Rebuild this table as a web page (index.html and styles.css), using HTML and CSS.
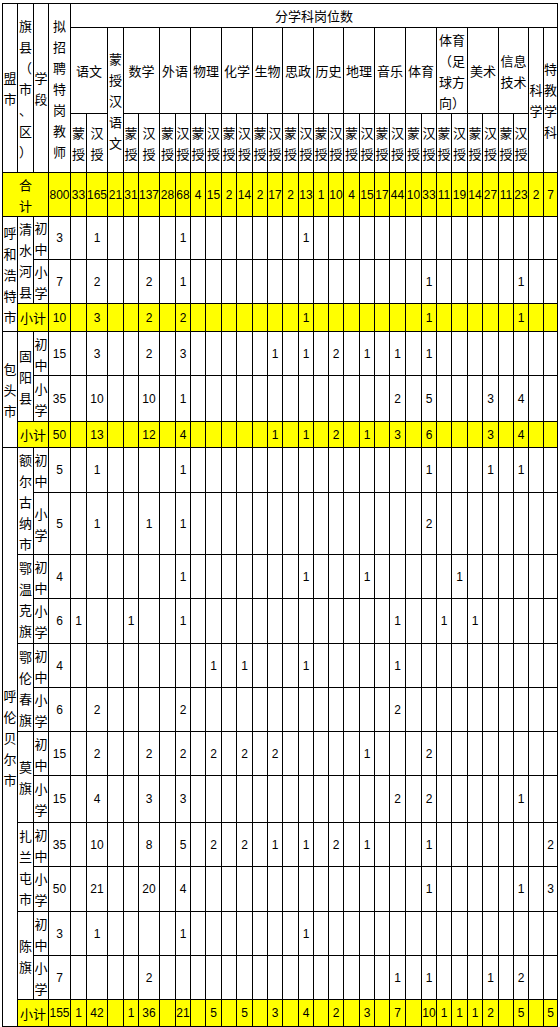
FILE: index.html
```html
<!DOCTYPE html>
<html lang="zh-CN">
<head>
<meta charset="utf-8">
<title>特岗教师岗位表</title>
<link rel="stylesheet" href="styles.css">
</head>
<body>
<table class="sheet">
<colgroup>
<col class="w15"><col class="w16"><col class="w15"><col class="w22">
<col class="w16"><col class="w21"><col class="w16"><col class="w15"><col class="w21">
<col class="w16"><col class="w15"><col class="w15"><col class="w16"><col class="w15">
<col class="w16"><col class="w15"><col class="w15"><col class="w16"><col class="w15">
<col class="w15"><col class="w15"><col class="w16"><col class="w15"><col class="w15">
<col class="w16"><col class="w16"><col class="w15"><col class="w15"><col class="w16">
<col class="w15"><col class="w16"><col class="w15"><col class="w15"><col class="w15">
<col class="w14">
</colgroup>
<thead>
<tr class="r24">
<th rowspan="3">盟市</th>
<th rowspan="3">旗县（市、区）</th>
<th rowspan="3">学段</th>
<th rowspan="3">拟招聘特岗教师</th>
<th colspan="31">分学科岗位数</th>
</tr>
<tr class="r86">
<th colspan="2">语文</th>
<th rowspan="2">蒙授汉语文</th>
<th colspan="2">数学</th>
<th colspan="2">外语</th>
<th colspan="2">物理</th>
<th colspan="2">化学</th>
<th colspan="2">生物</th>
<th colspan="2">思政</th>
<th colspan="2">历史</th>
<th colspan="2">地理</th>
<th colspan="2">音乐</th>
<th colspan="2">体育</th>
<th colspan="2">体育（足球方向）</th>
<th colspan="2">美术</th>
<th colspan="2">信息技术</th>
<th rowspan="2">科学</th>
<th rowspan="2">特教学科</th>
</tr>
<tr class="r59">
<th>蒙授</th><th>汉授</th>
<th>蒙授</th><th>汉授</th>
<th>蒙授</th><th>汉授</th>
<th>蒙授</th><th>汉授</th>
<th>蒙授</th><th>汉授</th>
<th>蒙授</th><th>汉授</th>
<th>蒙授</th><th>汉授</th>
<th>蒙授</th><th>汉授</th>
<th>蒙授</th><th>汉授</th>
<th>蒙授</th><th>汉授</th>
<th>蒙授</th><th>汉授</th>
<th>蒙授</th><th>汉授</th>
<th>蒙授</th><th>汉授</th>
<th>蒙授</th><th>汉授</th>
</tr>
</thead>
<tbody>
<tr class="r44 y">
<th colspan="3">合<br>计</th><td>800</td>
<td>33</td><td>165</td><td>21</td><td>31</td><td>137</td><td>28</td><td>68</td><td>4</td><td>15</td><td>2</td><td>14</td><td>2</td><td>17</td><td>2</td><td>13</td><td>1</td><td>10</td><td>4</td><td>15</td><td>17</td><td>44</td><td>10</td><td>33</td><td>11</td><td>19</td><td>14</td><td>27</td><td>11</td><td>23</td><td>2</td><td>7</td>
</tr>

<tr class="r43">
<th rowspan="3">呼和浩特市</th><th rowspan="2">清水河县</th><th>初中</th><td>3</td>
<td></td><td>1</td><td></td><td></td><td></td><td></td><td>1</td>
<td></td><td></td><td></td><td></td><td></td><td></td><td></td><td>1</td>
<td></td><td></td><td></td><td></td><td></td><td></td><td></td><td></td>
<td></td><td></td><td></td><td></td><td></td><td></td><td></td><td></td>
</tr>
<tr class="r44">
<th>小学</th><td>7</td>
<td></td><td>2</td><td></td><td></td><td>2</td><td></td><td>1</td>
<td></td><td></td><td></td><td></td><td></td><td></td><td></td><td></td>
<td></td><td></td><td></td><td></td><td></td><td></td><td></td><td>1</td>
<td></td><td></td><td></td><td></td><td></td><td>1</td><td></td><td></td>
</tr>
<tr class="r28 y">
<th colspan="2">小计</th><td>10</td>
<td></td><td>3</td><td></td><td></td><td>2</td><td></td><td>2</td>
<td></td><td></td><td></td><td></td><td></td><td></td><td></td><td>1</td>
<td></td><td></td><td></td><td></td><td></td><td></td><td></td><td>1</td>
<td></td><td></td><td></td><td></td><td></td><td>1</td><td></td><td></td>
</tr>

<tr class="r44">
<th rowspan="3">包头市</th><th rowspan="2">固阳县</th><th>初中</th><td>15</td>
<td></td><td>3</td><td></td><td></td><td>2</td><td></td><td>3</td>
<td></td><td></td><td></td><td></td><td></td><td>1</td><td></td><td>1</td>
<td></td><td>2</td><td></td><td>1</td><td></td><td>1</td><td></td><td>1</td>
<td></td><td></td><td></td><td></td><td></td><td></td><td></td><td></td>
</tr>
<tr class="r46">
<th>小学</th><td>35</td>
<td></td><td>10</td><td></td><td></td><td>10</td><td></td><td>1</td>
<td></td><td></td><td></td><td></td><td></td><td></td><td></td><td></td>
<td></td><td></td><td></td><td></td><td></td><td>2</td><td></td><td>5</td>
<td></td><td></td><td></td><td>3</td><td></td><td>4</td><td></td><td></td>
</tr>
<tr class="r26 y">
<th colspan="2">小计</th><td>50</td>
<td></td><td>13</td><td></td><td></td><td>12</td><td></td><td>4</td>
<td></td><td></td><td></td><td></td><td></td><td>1</td><td></td><td>1</td>
<td></td><td>2</td><td></td><td>1</td><td></td><td>3</td><td></td><td>6</td>
<td></td><td></td><td></td><td>3</td><td></td><td>4</td><td></td><td></td>
</tr>

<tr class="r45">
<th rowspan="13">呼伦贝尔市</th><th rowspan="2">额尔古纳市</th><th>初中</th><td>5</td>
<td></td><td>1</td><td></td><td></td><td></td><td></td><td>1</td>
<td></td><td></td><td></td><td></td><td></td><td></td><td></td><td></td>
<td></td><td></td><td></td><td></td><td></td><td></td><td></td><td>1</td>
<td></td><td></td><td></td><td>1</td><td></td><td>1</td><td></td><td></td>
</tr>
<tr class="r62">
<th>小学</th><td>5</td>
<td></td><td>1</td><td></td><td></td><td>1</td><td></td><td>1</td>
<td></td><td></td><td></td><td></td><td></td><td></td><td></td><td></td>
<td></td><td></td><td></td><td></td><td></td><td></td><td></td><td>2</td>
<td></td><td></td><td></td><td></td><td></td><td></td><td></td><td></td>
</tr>
<tr class="r44">
<th rowspan="2">鄂温克旗</th><th>初中</th><td>4</td>
<td></td><td></td><td></td><td></td><td></td><td></td><td>1</td>
<td></td><td></td><td></td><td></td><td></td><td></td><td></td><td>1</td>
<td></td><td></td><td></td><td>1</td><td></td><td></td><td></td><td></td>
<td></td><td>1</td><td></td><td></td><td></td><td></td><td></td><td></td>
</tr>
<tr class="r45">
<th>小学</th><td>6</td>
<td>1</td><td></td><td></td><td>1</td><td></td><td></td><td>1</td>
<td></td><td></td><td></td><td></td><td></td><td></td><td></td><td></td>
<td></td><td></td><td></td><td></td><td></td><td>1</td><td></td><td></td>
<td>1</td><td></td><td>1</td><td></td><td></td><td></td><td></td><td></td>
</tr>
<tr class="r44">
<th rowspan="2">鄂伦春旗</th><th>初中</th><td>4</td>
<td></td><td></td><td></td><td></td><td></td><td></td><td></td>
<td></td><td>1</td><td></td><td>1</td><td></td><td></td><td></td><td>1</td>
<td></td><td></td><td></td><td></td><td></td><td>1</td><td></td><td></td>
<td></td><td></td><td></td><td></td><td></td><td></td><td></td><td></td>
</tr>
<tr class="r44">
<th>小学</th><td>6</td>
<td></td><td>2</td><td></td><td></td><td></td><td></td><td>2</td>
<td></td><td></td><td></td><td></td><td></td><td></td><td></td><td></td>
<td></td><td></td><td></td><td></td><td></td><td>2</td><td></td><td></td>
<td></td><td></td><td></td><td></td><td></td><td></td><td></td><td></td>
</tr>
<tr class="r44">
<th rowspan="2">莫旗</th><th>初中</th><td>15</td>
<td></td><td>2</td><td></td><td></td><td>2</td><td></td><td>2</td>
<td></td><td>2</td><td></td><td>2</td><td></td><td>2</td><td></td><td></td>
<td></td><td></td><td></td><td>1</td><td></td><td></td><td></td><td>2</td>
<td></td><td></td><td></td><td></td><td></td><td></td><td></td><td></td>
</tr>
<tr class="r47">
<th>小学</th><td>15</td>
<td></td><td>4</td><td></td><td></td><td>3</td><td></td><td>3</td>
<td></td><td></td><td></td><td></td><td></td><td></td><td></td><td></td>
<td></td><td></td><td></td><td></td><td></td><td>2</td><td></td><td>2</td>
<td></td><td></td><td></td><td></td><td></td><td>1</td><td></td><td></td>
</tr>
<tr class="r44">
<th rowspan="2">扎兰屯市</th><th>初中</th><td>35</td>
<td></td><td>10</td><td></td><td></td><td>8</td><td></td><td>5</td>
<td></td><td>2</td><td></td><td>2</td><td></td><td>1</td><td></td><td>1</td>
<td></td><td>2</td><td></td><td>1</td><td></td><td></td><td></td><td>1</td>
<td></td><td></td><td></td><td></td><td></td><td></td><td></td><td>2</td>
</tr>
<tr class="r45">
<th>小学</th><td>50</td>
<td></td><td>21</td><td></td><td></td><td>20</td><td></td><td>4</td>
<td></td><td></td><td></td><td></td><td></td><td></td><td></td><td></td>
<td></td><td></td><td></td><td></td><td></td><td></td><td></td><td>1</td>
<td></td><td></td><td></td><td></td><td></td><td>1</td><td></td><td>3</td>
</tr>
<tr class="r44">
<th rowspan="2">陈旗</th><th>初中</th><td>3</td>
<td></td><td>1</td><td></td><td></td><td></td><td></td><td>1</td>
<td></td><td></td><td></td><td></td><td></td><td></td><td></td><td>1</td>
<td></td><td></td><td></td><td></td><td></td><td></td><td></td><td></td>
<td></td><td></td><td></td><td></td><td></td><td></td><td></td><td></td>
</tr>
<tr class="r44">
<th>小学</th><td>7</td>
<td></td><td></td><td></td><td></td><td>2</td><td></td><td></td>
<td></td><td></td><td></td><td></td><td></td><td></td><td></td><td></td>
<td></td><td></td><td></td><td></td><td></td><td>1</td><td></td><td>1</td>
<td></td><td></td><td></td><td>1</td><td></td><td>2</td><td></td><td></td>
</tr>
<tr class="r27 y">
<th colspan="2">小计</th><td>155</td>
<td>1</td><td>42</td><td></td><td>1</td><td>36</td><td></td><td>21</td>
<td></td><td>5</td><td></td><td>5</td><td></td><td>3</td><td></td><td>4</td>
<td></td><td>2</td><td></td><td>3</td><td></td><td>7</td><td></td><td>10</td>
<td>1</td><td>1</td><td>1</td><td>2</td><td></td><td>5</td><td></td><td>5</td>
</tr>
</tbody>
</table>
</body>
</html>
```

FILE: styles.css
```css
html, body {
  margin: 0;
  padding: 0;
  background: #fff;
}

body {
  padding: 3px 0 0 2px;
}

.sheet {
  border-collapse: collapse;
  table-layout: fixed;
  width: 556px;
  font-family: "Liberation Sans", "Noto Sans CJK SC", sans-serif;
  font-size: 12px;
  color: #000;
}

.sheet th,
.sheet td {
  border: 1px solid #000;
  padding: 0;
  text-align: center;
  vertical-align: middle;
  overflow: visible;
  white-space: normal;
}

.sheet td {
  line-height: 14px;
}

.sheet th {
  font-weight: normal;
  font-family: "Noto Sans CJK SC", sans-serif;
  font-size: 13px;
  line-height: 21px;
  line-break: anywhere;
}

.y > td,
.y > th {
  background: #ffff00;
}

.w14 { width: 14px; }
.w15 { width: 15px; }
.w16 { width: 16px; }
.w21 { width: 21px; }
.w22 { width: 22px; }

.r24 { height: 24px; }
.r26 { height: 26px; }
.r27 { height: 27px; }
.r28 { height: 28px; }
.r43 { height: 43px; }
.r44 { height: 44px; }
.r45 { height: 45px; }
.r46 { height: 46px; }
.r47 { height: 47px; }
.r59 { height: 59px; }
.r62 { height: 62px; }
.r86 { height: 86px; }
```
